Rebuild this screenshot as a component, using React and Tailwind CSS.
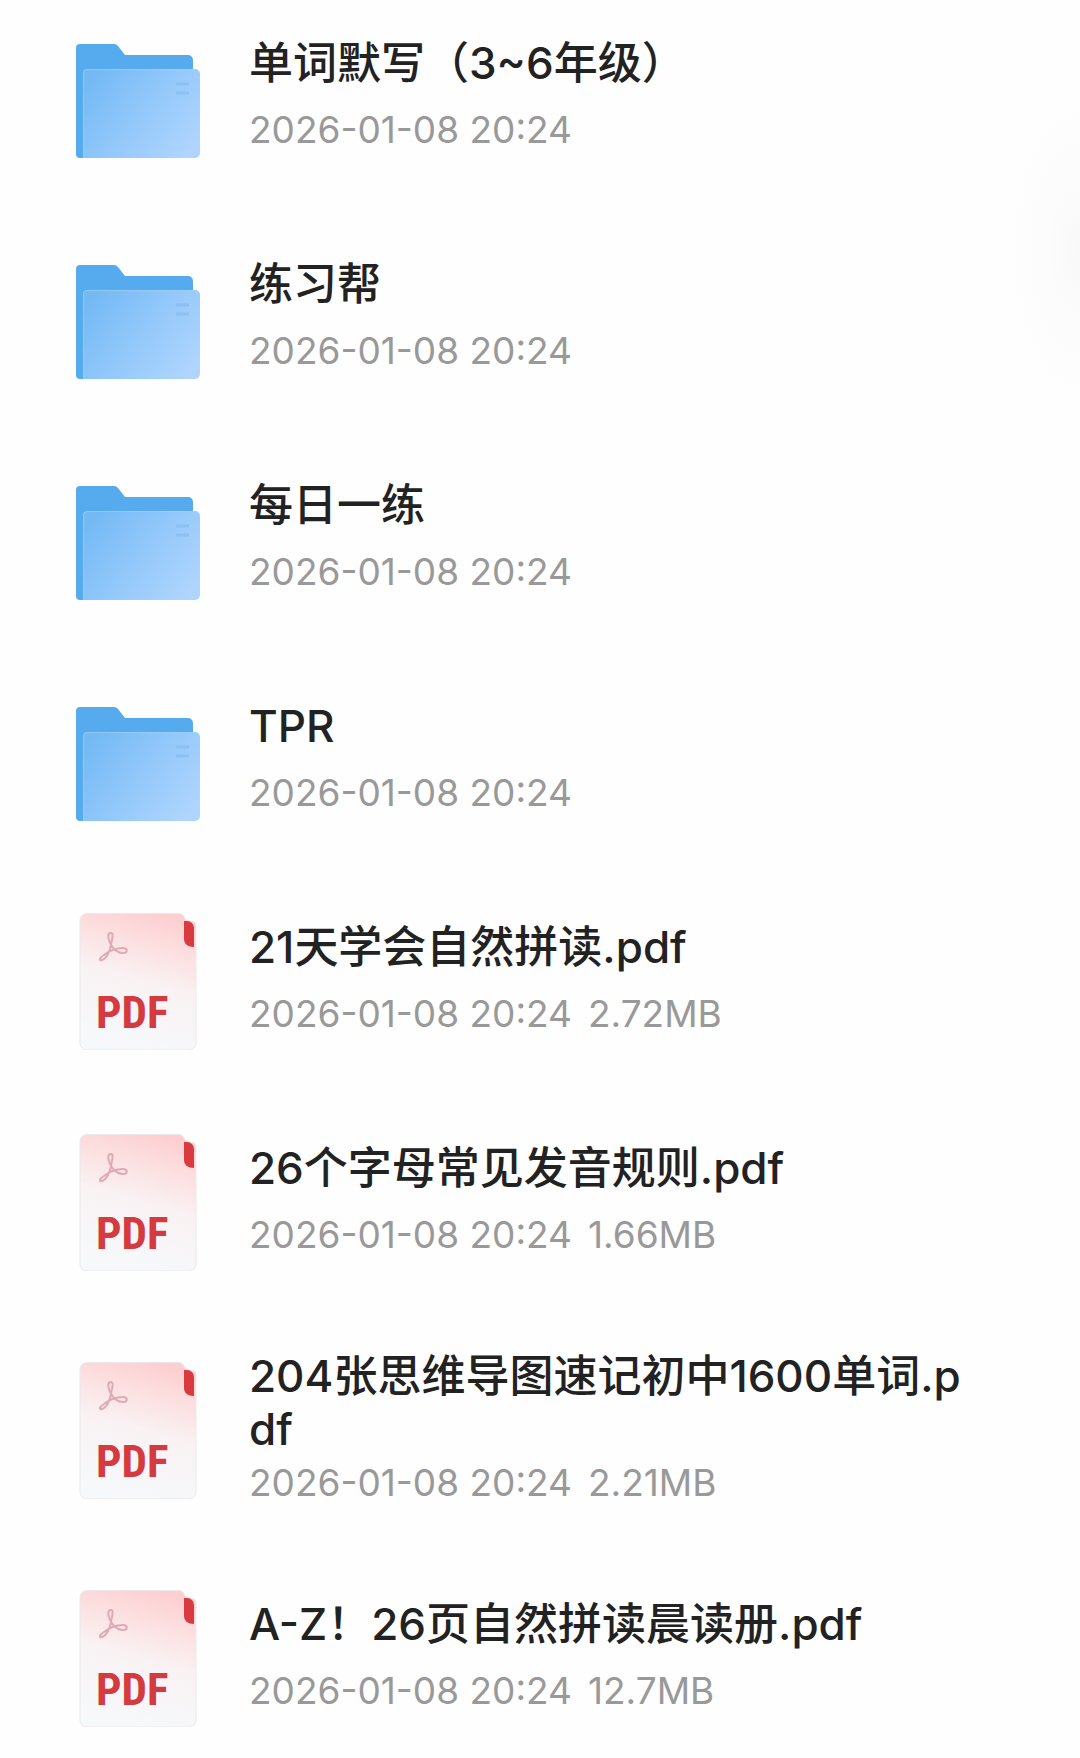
import clsx from 'clsx';

const files = [
  { name: '单词默写（3~6年级）', date: '2026-01-08 20:24', type: 'folder' },
  { name: '练习帮', date: '2026-01-08 20:24', type: 'folder' },
  { name: '每日一练', date: '2026-01-08 20:24', type: 'folder' },
  { name: 'TPR', date: '2026-01-08 20:24', type: 'folder' },
  {
    name: '21天学会自然拼读.pdf',
    date: '2026-01-08 20:24',
    size: '2.72MB',
    type: 'pdf',
  },
  {
    name: '26个字母常见发音规则.pdf',
    date: '2026-01-08 20:24',
    size: '1.66MB',
    type: 'pdf',
  },
  {
    name: '204张思维导图速记初中1600单词.pdf',
    date: '2026-01-08 20:24',
    size: '2.21MB',
    type: 'pdf',
  },
  {
    name: 'A-Z！26页自然拼读晨读册.pdf',
    date: '2026-01-08 20:24',
    size: '12.7MB',
    type: 'pdf',
  },
];

const FolderIcon = () => (
  <svg
    className="h-[138px] w-[138px] shrink-0"
    viewBox="0 0 138 138"
    aria-hidden="true"
  >
    <defs>
      <linearGradient id="folder-front" x1="0" y1="0.2" x2="1" y2="0.8">
        <stop offset="0" stopColor="#74b9f4" />
        <stop offset="0.5" stopColor="#93c8fa" />
        <stop offset="1" stopColor="#afd5fe" />
      </linearGradient>
    </defs>
    <path
      d="M7 20a4 4 0 0 1 4-4H45a5 5 0 0 1 4 2L56 27H119a5 5 0 0 1 5 5V62H24V130H11a4 4 0 0 1-4-4Z"
      fill="#55abed"
    />
    <path
      d="M14 45a4 4 0 0 1 4-4H126a5 5 0 0 1 5 5V125a5 5 0 0 1-5 5H14Z"
      fill="url(#folder-front)"
    />
    <path
      d="M14.500 129V45a3.500 3.500 0 0 1 3.500-3.500H126a4 4 0 0 1 4 4"
      fill="none"
      stroke="#a4d2fa"
      strokeOpacity="0.6"
    />
    <path
      d="M107 56H120M107 65H120"
      stroke="#7fb3ea"
      strokeWidth="3"
      strokeOpacity="0.5"
    />
  </svg>
);

const PdfIcon = () => (
  <svg
    className="h-[138px] w-[138px] shrink-0"
    viewBox="0 0 138 138"
    aria-hidden="true"
  >
    <defs>
      <linearGradient id="pdf-page" x1="0.65" y1="0" x2="0.4" y2="1">
        <stop offset="0" stopColor="#fdcfd1" />
        <stop offset="0.22" stopColor="#fcdfe0" />
        <stop offset="0.5" stopColor="#f9f2f3" />
        <stop offset="1" stopColor="#f6f9fb" />
      </linearGradient>
    </defs>
    <path
      d="M18 1.500H109c4 0 6 2 7 6l7 2a4 4 0 0 1 4 4V131a7 7 0 0 1-7 7H18a7 7 0 0 1-7-7V8.500a7 7 0 0 1 7-7Z"
      fill="url(#pdf-page)"
      stroke="#ece8ea"
    />
    <path
      d="M115 9H118a7 7 0 0 1 7 7V35c-6 0-10-3-10-8Z"
      fill="#d93a40"
    />
    <path
      d="M42 21c-4 0-3 5-1 10 3 6 8 10 13 10 5 0 5-5 0-5-7 0-14 3-19 7-5 3-5 6-2 5 4-1 8-8 9-15 1-6 3-12 0-12Z"
      fill="none"
      stroke="#dfa9b5"
      strokeWidth="2"
      strokeLinejoin="round"
    />
    <text
      x="27"
      y="116"
      fill="#d33b40"
      fontSize="45"
      fontWeight="700"
      fontFamily='"Liberation Sans Narrow", "Roboto Condensed", Roboto, sans-serif'
    >
      PDF
    </text>
  </svg>
);

const FileRow = ({ name, date, size, type }) => (
  <li>
    <a href="#file" className="flex min-h-[145px] items-center gap-[42px]">
      {type === 'folder' ? <FolderIcon /> : <PdfIcon />}
      <div
        className={clsx(
          'flex min-h-[145px] min-w-0 flex-1 flex-col justify-evenly',
          'leading-[53px]',
        )}
      >
        <h2 className="text-[44px] font-medium break-all text-[#222]">
          {name}
        </h2>
        <p className="flex gap-4 text-[37px] text-[#999]">
          <span>{date}</span>
          {size && <span>{size}</span>}
        </p>
      </div>
    </a>
  </li>
);

const App = () => (
  <main className="relative min-h-screen overflow-hidden bg-[#fefefe] font-['Inter','Noto_Sans_CJK_SC',sans-serif]">
    <ul className="flex flex-col gap-[76px] pt-[24px] pr-[112px] pl-[69px]">
      {files.map((file) => (
        <FileRow key={file.name} {...file} />
      ))}
    </ul>
    <div className="pointer-events-none absolute top-[80px] right-0 h-[340px] w-[80px] bg-[radial-gradient(ellipse_at_right,#f8f8f8,#fcfcfc_30%,transparent_70%)]" />
  </main>
);

export default App;
